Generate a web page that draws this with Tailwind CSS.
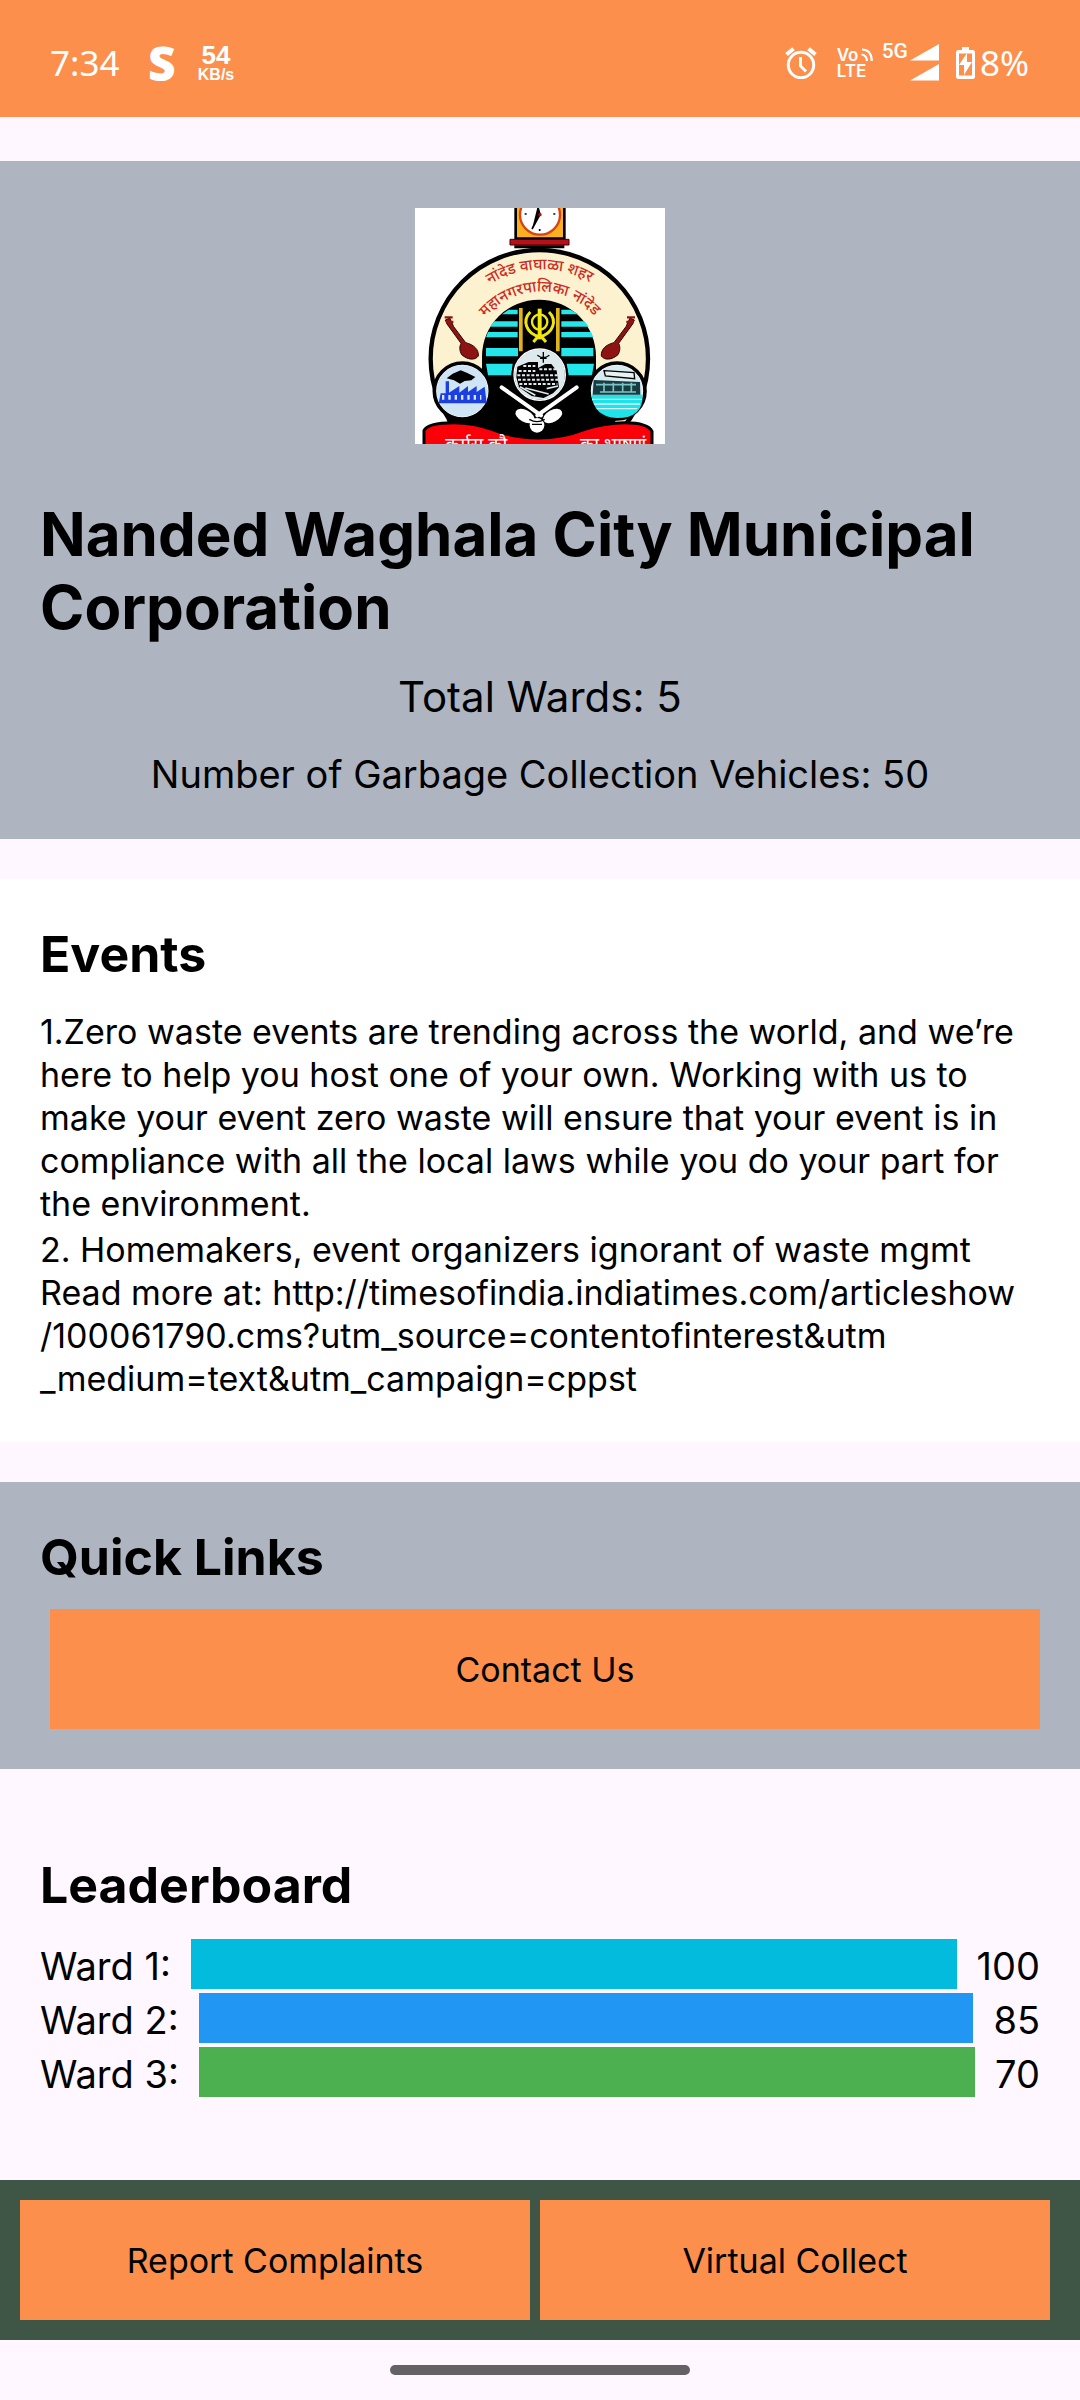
<!DOCTYPE html>
<html lang="en">
<head>
<meta charset="utf-8">
<meta name="viewport" content="width=device-width, initial-scale=1">
<title>Nanded Waghala City Municipal Corporation</title>
<script src="https://cdn.jsdelivr.net/npm/@tailwindcss/browser@4"></script>
</head>
<body class="flex min-h-screen flex-col bg-[#fef7ff] font-[Inter,sans-serif] text-black">

<!-- Status bar -->
<div class="flex h-[117px] items-center justify-between bg-[#fc8f4c] pt-2 pr-[51px] pl-[50px] text-white">
  <div class="flex items-center">
    <span class="w-[98px] font-['Noto_Sans',sans-serif] text-[35px] leading-[40px]">7:34</span>
    <span class="w-[48px] font-['Noto_Sans',sans-serif] text-[48px] leading-[40px] font-black">S</span>
    <span class="flex w-[40px] flex-col items-center font-['Liberation_Sans',sans-serif] font-bold">
      <span class="text-[26px] leading-[24px]">54</span>
      <span class="text-[16px] leading-[16px]">KB/s</span>
    </span>
  </div>
  <div class="flex items-center">
    <svg class="mr-[20px] h-[32px] w-[32px]" viewBox="0 0 32 32" fill="none" stroke="#fff" stroke-width="3" aria-label="Alarm set">
      <circle cx="16" cy="18" r="12.7"/><path d="M15.500 10v9l5.500 5.500"/><path stroke-width="4" d="M1.500 7.500 8.500 1.800M30.500 7.500 23.500 1.800"/>
    </svg>
    <span class="relative mr-[8px] flex w-[37px] flex-col font-['Inter',sans-serif] text-[17px] leading-[16px] font-semibold">
      <span>Vo</span><span>LTE</span>
      <svg class="absolute top-0 right-0 h-[15px] w-[15px]" viewBox="0 0 15 15" fill="none" stroke="#fff" stroke-width="2.200" aria-hidden="true"><path d="M3 2.500C9 2.500 12.500 6 12.800 14M2.500 7.500C6 8 7.800 10 8 14"/></svg>
    </span>
    <span class="self-start font-['Roboto',sans-serif] text-[21px] leading-[16px] font-medium">5G</span>
    <svg class="mr-[17px] ml-[2px] h-[37px] w-[29px]" viewBox="0 0 29 37" fill="#fff" aria-label="Signal"><path d="M0 16.500 29 0v16.500zM0 36.500 29 20v16.500z"/></svg>
    <svg class="mr-[5px] h-[32px] w-[19px]" viewBox="0 0 19 32" aria-label="Charging">
      <path fill="#fff" fill-rule="evenodd" d="M6 0h7v3h4.500L19 4.500v26L17.500 32h-16L0 30.500v-26L1.500 3H6zM3 6.500v22h13v-22z"/>
      <path fill="#fff" d="m11 6-8 12h5v10l8-13h-5z"/>
    </svg>
    <span class="font-['Noto_Sans',sans-serif] text-[35px] leading-[40px]">8%</span>
  </div>
</div>

<main class="mt-[44px] flex flex-1 flex-col">
  <!-- Corporation summary -->
  <header class="flex flex-col items-center bg-[#aeb5c1] px-[40px] pt-[47px] pb-[40px]">
    <svg class="mb-[54px] h-[236px] w-[250px]" viewBox="45 54 750 708" role="img" aria-label="Municipal corporation emblem">
      <defs>
        <path id="arcTop" d="M236 308A290 290 0 0 1 604 300"/>
        <path id="arcLow" d="M226 428A216 216 0 0 1 614 424"/>
      </defs>
      <path fill="#fff" d="M45 54h750v708H45z"/>
      <circle cx="418" cy="506" r="326" fill="#fdf2cf" stroke="#000" stroke-width="13"/>
      <!-- clock tower -->
      <path fill="#fbb022" stroke="#000" stroke-width="8" d="M347 40h146v106H347z"/>
      <circle cx="420" cy="74" r="60" fill="#fff" stroke="#d8440f" stroke-width="7"/>
      <path stroke="#000" stroke-width="5" d="m396 117 24-44-7-24M419 117v6M374 72h6M460 72h6"/>
      <circle cx="420" cy="74" r="5" fill="#c00"/>
      <path fill="#b5121b" stroke="#400" stroke-width="3" d="M330 148h177v17H330z"/>
      <path d="M343 166h150v9H343z"/>
      <!-- name on the arch -->
      <g fill="#cf2a22" font-family="Noto Sans Devanagari, Noto Sans, sans-serif" font-size="46" font-weight="500">
        <text text-anchor="middle"><textPath href="#arcTop" startOffset="50%">नांदेड वाघाळा शहर</textPath></text>
        <text text-anchor="middle"><textPath href="#arcLow" startOffset="50%">महानगरपालिका नांदेड</textPath></text>
      </g>
      <!-- inner gate -->
      <path d="M246 500a171 171 0 0 1 342 0v60l60 130-40 72H210l-70-70 106-130z"/>
      <path d="M254 540 200 700h440l-60-160z"/>
      <path fill="#23e5ea" d="M326 359h27v14h-47zM283 394h70v16h-83zM264 426h89v16h-95zM258 474h96v25h-96zM258 521h80l-4 35h-70zM484 359h27l25 14h-52zM484 394h70l12 16h-82zM484 426h89l7 16h-96zM484 474h96v25h-96zM500 521h82l-6 35h-70z"/>
      <path fill="#e0b51b" d="M357 354h11v130h-11zM468 354h11v130h-11z"/>
      <g fill="none" stroke="#f2e70c" stroke-width="7">
        <circle cx="419" cy="396" r="23"/>
        <path stroke-width="12" d="M419 356v92"/>
        <path stroke-width="9" d="M391 366c-26 26-12 66 28 74 40-8 54-48 28-74M400 456l19-22 19 22"/>
      </g>
      <!-- crossed horns -->
      <path fill="none" stroke="#fff" stroke-width="12" stroke-linecap="round" d="m305 592 118 84M530 592l-118 84"/>
      <g fill="#fff"><ellipse cx="375" cy="678" rx="31" ry="18" transform="rotate(28 375 678)"/><ellipse cx="458" cy="678" rx="31" ry="18" transform="rotate(-28 458 678)"/><circle cx="411" cy="706" r="22"/></g>
      <path stroke="#000" stroke-width="4" fill="none" d="M388 688q23 14 46 0M396 703h30"/>
      <!-- temple medallion -->
      <circle cx="419" cy="554" r="80" fill="#dce9ed" stroke="#000" stroke-width="9"/>
      <circle cx="419" cy="554" r="77" fill="none" stroke="#fff" stroke-width="4"/>
      <path d="M352 530l34-14h28v18l22-12h18l16 20 7 50-18 18-28 14-36-6-38-26-8-30z"/>
      <path fill="none" stroke="#dce9ed" stroke-width="6" stroke-dasharray="9 5" d="M356 543h50M352 556h122M354 569h124M358 582h114M418 538h50M370 528h36"/>
      <path fill="none" stroke="#dce9ed" stroke-width="5" d="m360 590 46 26M376 594l70 18M440 596l34-8"/>
      <path fill="none" stroke="#000" stroke-width="4" d="M430 486v32M412 496q18 14 36 0M420 505h20"/>
      <!-- factory medallion -->
      <circle cx="187" cy="603" r="84" fill="#fff" stroke="#000" stroke-width="11"/>
      <circle cx="187" cy="603" r="77" fill="#cfe4f4"/>
      <path d="m140 565 18-14 24-10 20 8 24 12-12 10-20 2-14 8-18-10z"/>
      <path fill="#1c3fe0" d="M137 574h10v34l31-20v20l26-20v18l26-18v18l24-16 6 50H116l6-30h15z"/>
      <path fill="none" stroke="#dbe8fb" stroke-width="14" stroke-dasharray="7 12" d="M126 622h118"/>
      <!-- dam medallion -->
      <circle cx="651" cy="603" r="84" fill="#fff" stroke="#000" stroke-width="11"/>
      <circle cx="651" cy="603" r="77" fill="#d8ebf1"/>
      <path fill="#1fe3e8" d="M574 614h154q2 70-77 70-70-4-77-70z"/>
      <path fill="none" stroke="#d8f5f7" stroke-width="4" d="M576 628h150M582 642h138M590 656h122"/>
      <path fill="#163d42" d="m581 570 139 6 1 38H578z"/>
      <path fill="#e8f2f2" stroke="#000" stroke-width="4" d="m612 542 90 6 2 18-88-8z"/>
      <path fill="none" stroke="#7cc3c4" stroke-width="5" d="M588 584h120M600 606h108M612 578v26M640 578v26M668 578v26M694 578v26"/>
      <!-- veenas -->
      <g id="veena"><path fill="#8e1414" stroke="#2c0505" stroke-width="3" d="m136 390 13-6 12 26 36 48c26 6 40 22 38 40-10 14-32 12-50-4-8-14-6-26-2-34l-42-58z"/><path fill="none" stroke="#8e1414" stroke-width="7" d="M134 382h24M138 396h22"/></g>
      <use href="#veena" transform="matrix(-1 0 0 1 839 0)"/>
      <!-- ribbon -->
      <path fill="#fb0008" stroke="#000" stroke-width="9" d="M72 790v-68q10-24 90-24 60 0 120 22 60 24 132 24 74 0 140-26 60-20 120-20 70 0 82 26v66z"/>
      <g fill="#fff" font-family="Noto Sans Devanagari, Noto Sans, sans-serif" font-size="56"><text x="136" y="784">कर्मसु कौ</text><text x="540" y="784">का भाषणं</text></g>
    </svg>
    <h1 class="mb-[25px] self-stretch text-[60px] leading-[73px] font-bold">Nanded Waghala City Municipal Corporation</h1>
    <p class="mb-[25px] text-[42px] leading-[55px]">Total Wards: 5</p>
    <p class="text-[38px] leading-[50px]">Number of Garbage Collection Vehicles: 50</p>
  </header>

  <!-- Events -->
  <section class="mt-[40px] bg-white px-[40px] pt-[45px] pb-[42px]">
    <h2 class="mb-[25px] text-[50px] leading-[61px] font-bold">Events</h2>
    <p class="mb-[3px] text-[34px] leading-[43px]">1.Zero waste events are trending across the world, and we’re here to help you host one of your own. Working with us to make your event zero waste will ensure that your event is in compliance with all the local laws while you do your part for the environment.</p>
    <p class="text-[34px] leading-[43px]">2. Homemakers, event organizers ignorant of waste mgmt<br>Read more at: http://timesofindia.indiatimes.com/articleshow<wbr>/100061790.cms?utm_source=contentofinterest&amp;utm<wbr>_medium=text&amp;utm_campaign=cppst</p>
  </section>

  <!-- Quick links -->
  <section class="mt-[40px] bg-[#aeb5c1] px-[40px] pt-[45px] pb-[40px]">
    <h2 class="mb-[21px] text-[50px] leading-[61px] font-bold">Quick Links</h2>
    <div class="flex pl-[10px]"><button class="h-[120px] flex-1 bg-[#fc8f4c] text-[34px] leading-[43px]">Contact Us</button></div>
  </section>

  <!-- Leaderboard -->
  <section class="px-[40px] pt-[86px] pb-[78px]">
    <h2 class="mb-[23px] text-[50px] leading-[61px] font-bold">Leaderboard</h2>
    <div class="flex h-[54px] items-center gap-[20px] text-[38px] leading-[50px]"><span>Ward 1:</span><span class="h-[50px] flex-1 self-start bg-[#03bcdd]"></span><span>100</span></div>
    <div class="flex h-[54px] items-center gap-[20px] text-[38px] leading-[50px]"><span>Ward 2:</span><span class="h-[50px] flex-1 self-start bg-[#2196f3]"></span><span>85</span></div>
    <div class="flex h-[54px] items-center gap-[20px] text-[38px] leading-[50px]"><span>Ward 3:</span><span class="h-[50px] flex-1 self-start bg-[#4caf50]"></span><span>70</span></div>
  </section>
</main>

<!-- Actions -->
<nav class="flex gap-[10px] bg-[#3f5545] py-[20px] pr-[30px] pl-[20px] text-[34px] leading-[43px]">
  <button class="h-[120px] flex-1 bg-[#fc8f4c]">Report Complaints</button>
  <button class="h-[120px] flex-1 bg-[#fc8f4c]">Virtual Collect</button>
</nav>
<div class="flex h-[60px] items-center justify-center"><span class="h-[10px] w-[300px] rounded-full bg-[#656266]"></span></div>
</body>
</html>
